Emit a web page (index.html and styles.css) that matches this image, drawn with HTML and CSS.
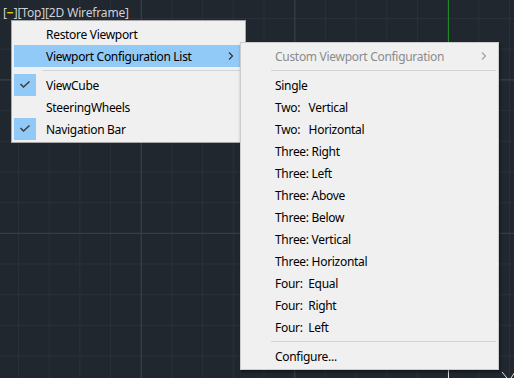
FILE: index.html
```html
<!DOCTYPE html>
<html>

<head>
    <link rel="stylesheet" href="styles.css">
</head>

<body>
    <div class="viewport">
        <div class="vp-label">[<span class="vp-minus">−</span>][Top][2D Wireframe]</div>
        <div class="axis-y"></div>
        <svg class="ucs-tip" width="14" height="8" viewBox="0 0 14 8">
            <path d="M1 1 L6 7 M10 7 L14 1" stroke="#e6e6e6" stroke-width="1" fill="none" />
        </svg>

        <div class="menu main-menu">
            <div class="item"><span class="gutter"></span><span class="label">Restore Viewport</span></div>
            <div class="item active">
                <span class="gutter"></span><span class="label">Viewport Configuration List</span>
                <svg class="arrow" width="6" height="8" viewBox="0 0 6 8"><path d="M1 0.5 L4.5 4 L1 7.5" stroke="#333" stroke-width="1.2" fill="none" /></svg>
            </div>
            <div class="sep"></div>
            <div class="item">
                <span class="gutter checked">
                    <svg width="22" height="22" viewBox="0 0 22 22"><path d="M6.5 10 L9.5 13 L15.5 7.5" stroke="#3c3c3c" stroke-width="1.5" fill="none" /></svg>
                </span><span class="label">ViewCube</span>
            </div>
            <div class="item"><span class="gutter"></span><span class="label">SteeringWheels</span></div>
            <div class="item">
                <span class="gutter checked">
                    <svg width="22" height="22" viewBox="0 0 22 22"><path d="M6.5 10 L9.5 13 L15.5 7.5" stroke="#3c3c3c" stroke-width="1.5" fill="none" /></svg>
                </span><span class="label">Navigation Bar</span>
            </div>
        </div>

        <div class="menu sub-menu">
            <div class="item disabled">
                <span class="gutter"></span><span class="label">Custom Viewport Configuration</span>
                <svg class="arrow" width="6" height="8" viewBox="0 0 6 8"><path d="M1 0.5 L4.5 4 L1 7.5" stroke="#a0a0a0" stroke-width="1.2" fill="none" /></svg>
            </div>
            <div class="sep"></div>
            <div class="item"><span class="gutter"></span><span class="label">Single</span></div>
            <div class="item"><span class="gutter"></span><span class="label">Two:   Vertical</span></div>
            <div class="item"><span class="gutter"></span><span class="label">Two:   Horizontal</span></div>
            <div class="item"><span class="gutter"></span><span class="label">Three: Right</span></div>
            <div class="item"><span class="gutter"></span><span class="label">Three: Left</span></div>
            <div class="item"><span class="gutter"></span><span class="label">Three: Above</span></div>
            <div class="item"><span class="gutter"></span><span class="label">Three: Below</span></div>
            <div class="item"><span class="gutter"></span><span class="label">Three: Vertical</span></div>
            <div class="item"><span class="gutter"></span><span class="label">Three: Horizontal</span></div>
            <div class="item"><span class="gutter"></span><span class="label">Four:  Equal</span></div>
            <div class="item"><span class="gutter"></span><span class="label">Four:  Right</span></div>
            <div class="item"><span class="gutter"></span><span class="label">Four:  Left</span></div>
            <div class="sep"></div>
            <div class="item"><span class="gutter"></span><span class="label">Configure...</span></div>
        </div>
    </div>
</body>

</html>
```

FILE: styles.css
```css
* {
    box-sizing: border-box;
}

body {
    margin: 0;
    font-family: "Noto Sans", "Open Sans", sans-serif;
    font-size: 12px;
}

.viewport {
    position: relative;
    width: 514px;
    height: 378px;
    overflow: hidden;
    background-color: #21272f;
    background-image:
        linear-gradient(to right, #39404a 1px, transparent 1px),
        linear-gradient(to bottom, #39404a 1px, transparent 1px),
        linear-gradient(to right, #29303a 1px, transparent 1px),
        linear-gradient(to bottom, #29303a 1px, transparent 1px);
    background-size: 153.5px 153.5px, 153.5px 153.5px, 30.7px 30.7px, 30.7px 30.7px;
    background-position: 140.8px 79.4px, 140.8px 79.4px, 18px 18px, 18px 18px;
}

.vp-label {
    position: absolute;
    top: 5px;
    left: 3px;
    color: #cfd2d6;
    line-height: 16px;
    letter-spacing: -0.15px;
    white-space: pre;
}

.vp-minus {
    color: #f0d000;
    font-weight: 700;
}

.axis-y {
    position: absolute;
    left: 448px;
    top: 0;
    width: 1px;
    height: 378px;
    background: linear-gradient(to bottom, #1f8a2a 0 200px, #e0e0e0 200px);
}

.ucs-tip {
    position: absolute;
    left: 501px;
    top: 371px;
}

.menu {
    position: absolute;
    background: #f0f0f0;
    padding: 2px;
    color: #000;
    letter-spacing: -0.3px;
}

.main-menu {
    left: 11px;
    top: 20px;
    width: 235px;
    border: 1px solid #a8a8a8;
}

.sub-menu {
    left: 240px;
    top: 42px;
    width: 259px;
    border: 1px solid #cccccc;
    box-shadow: 1px 2px 3px rgba(0, 0, 0, 0.45);
}

.item {
    display: flex;
    align-items: center;
    height: 22px;
}

.item.active {
    background: #91c9f7;
}

.item.disabled {
    color: #8b8b8b;
}

.gutter {
    width: 22px;
    height: 22px;
    flex-shrink: 0;
}

.gutter svg {
    display: block;
}

.gutter.checked {
    background: #91c9f7;
}

.label {
    margin-left: 10px;
    flex: 1;
    white-space: pre;
}

.arrow {
    margin-right: 9px;
}

.sep {
    height: 1px;
    margin: 3px 0 3px 28px;
    background: #d4d4d4;
}
```
